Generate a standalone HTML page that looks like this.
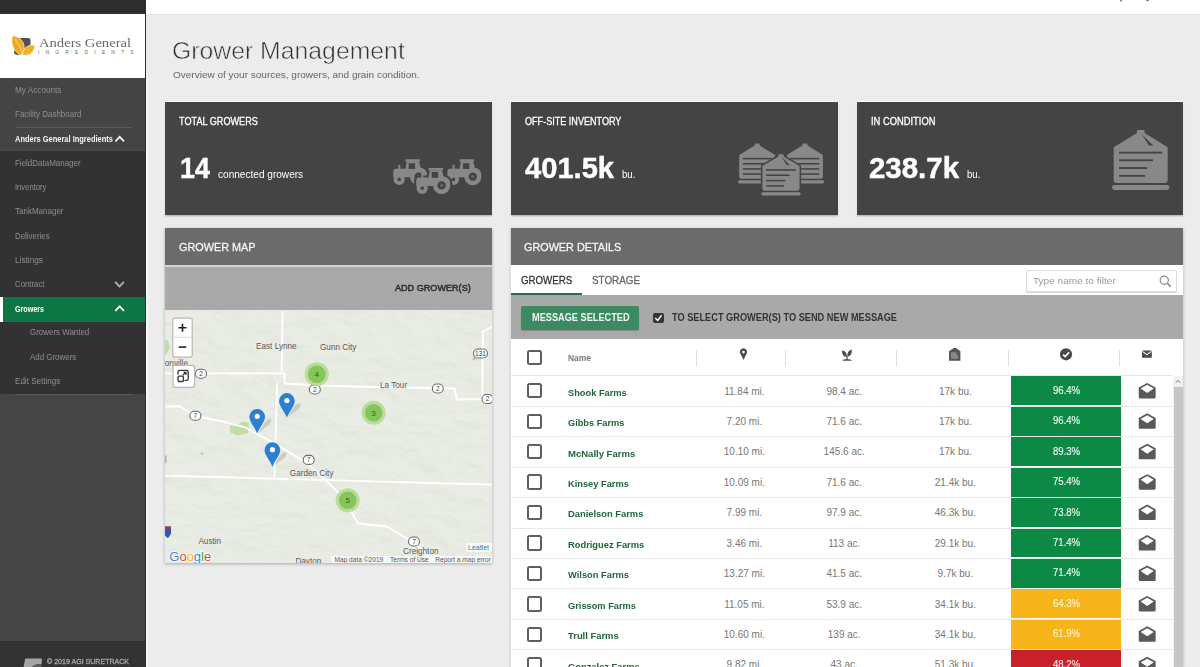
<!DOCTYPE html>
<html><head><meta charset="utf-8"><title>Grower Management</title>
<style>
html,body{margin:0;padding:0;width:1200px;height:667px;overflow:hidden;background:#ececec;font-family:'Liberation Sans', sans-serif;}
.t{position:absolute;white-space:nowrap;line-height:1;transform-origin:0 0;}
.r{position:absolute;}
svg{position:absolute;overflow:visible;}
</style></head><body>
<div class="r" style="left:146px;top:0px;width:1054.00px;height:14.00px;background:#ffffff;"></div>
<div class="r" style="left:146px;top:14px;width:1054.00px;height:1.00px;background:#e4e4e4;"></div>
<svg width="1200" height="20" style="left:0;top:0"><ellipse cx="1121" cy="0" rx="1.2" ry="1.5" fill="#888"/><ellipse cx="1147.5" cy="0" rx="1.5" ry="1.2" fill="#777"/></svg>
<div class="r" style="left:0px;top:0px;width:146.00px;height:14.00px;background:#2e2e2e;"></div>
<div class="r" style="left:0px;top:14px;width:146.00px;height:64.00px;background:#ffffff;"></div>
<div class="r" style="left:0px;top:78px;width:146.00px;height:73.00px;background:#444444;"></div>
<div class="r" style="left:15px;top:126.5px;width:117.00px;height:1.00px;background:#5c5c5c;"></div>
<div class="r" style="left:0px;top:151px;width:146.00px;height:243.00px;background:#323232;"></div>
<div class="r" style="left:0px;top:150.2px;width:146.00px;height:1.00px;background:#4a4a4a;"></div>
<div class="r" style="left:0px;top:296.6px;width:146.00px;height:25.20px;background:#0c7744;"></div>
<div class="r" style="left:0px;top:296.6px;width:3.00px;height:25.20px;background:#ffffff;"></div>
<div class="r" style="left:0px;top:394px;width:146.00px;height:247.00px;background:#454545;"></div>
<div class="r" style="left:14.5px;top:394.2px;width:117.50px;height:1.00px;background:#5a5a5a;"></div>
<div class="r" style="left:0px;top:641px;width:146.00px;height:26.00px;background:#333333;"></div>
<div class="r" style="left:145px;top:14px;width:1.00px;height:653.00px;background:#2c2c2c;"></div>
<div class="r" style="left:146px;top:78px;width:2.00px;height:589.00px;background:#f6f6f6;"></div>
<div class="t" style="left:15.30px;top:85.56px;font-size:8.4px;color:#8e8e8e;transform:scaleX(0.9780);">My Accounts</div>
<div class="t" style="left:15.30px;top:109.76px;font-size:8.4px;color:#8e8e8e;transform:scaleX(0.9570);">Facility Dashboard</div>
<div class="t" style="left:15.30px;top:134.66px;font-size:8.4px;color:#f4f4f4;font-weight:bold;transform:scaleX(0.8913);">Anders General Ingredients</div>
<div class="t" style="left:15.30px;top:158.76px;font-size:8.4px;color:#8e8e8e;transform:scaleX(0.9521);">FieldDataManager</div>
<div class="t" style="left:15.30px;top:183.26px;font-size:8.4px;color:#8e8e8e;transform:scaleX(0.9103);">Inventory</div>
<div class="t" style="left:15.30px;top:207.46px;font-size:8.4px;color:#8e8e8e;transform:scaleX(0.9558);">TankManager</div>
<div class="t" style="left:15.30px;top:231.76px;font-size:8.4px;color:#8e8e8e;transform:scaleX(0.9404);">Deliveries</div>
<div class="t" style="left:15.30px;top:256.06px;font-size:8.4px;color:#8e8e8e;transform:scaleX(0.9820);">Listings</div>
<div class="t" style="left:15.30px;top:280.36px;font-size:8.4px;color:#8e8e8e;transform:scaleX(0.9312);">Contract</div>
<div class="t" style="left:15.30px;top:304.56px;font-size:8.4px;color:#ffffff;font-weight:bold;transform:scaleX(0.8566);">Growers</div>
<div class="t" style="left:29.80px;top:328.36px;font-size:8.4px;color:#8e8e8e;transform:scaleX(0.9481);">Growers Wanted</div>
<div class="t" style="left:29.80px;top:353.16px;font-size:8.4px;color:#8e8e8e;transform:scaleX(0.9469);">Add Growers</div>
<div class="t" style="left:15.30px;top:377.26px;font-size:8.4px;color:#8e8e8e;transform:scaleX(0.9630);">Edit Settings</div>
<svg width="1" height="1" style="left:0;top:0"><path d="M115.40,141.40 L119.70,136.80 L124.00,141.40" fill="none" stroke="#f4f4f4" stroke-width="1.7"/></svg>
<svg width="1" height="1" style="left:0;top:0"><path d="M115.20,281.90 L119.50,286.50 L123.80,281.90" fill="none" stroke="#b8b8b8" stroke-width="1.7"/></svg>
<svg width="1" height="1" style="left:0;top:0"><path d="M115.30,310.90 L119.60,306.30 L123.90,310.90" fill="none" stroke="#ffffff" stroke-width="1.7"/></svg>
<svg width="40" height="30" style="left:10px;top:32px" viewBox="0 0 40 30">
<rect x="4.2" y="6" width="16.3" height="16.8" rx="2.4" fill="#505050"/>
<path d="M2.3,3.8 C11,4.3 17.2,12 12.6,23.2 C4.3,21.5 0.3,13 2.3,3.8 Z" fill="#f0aa1e" stroke="#fff" stroke-width="0.7"/>
<path d="M25.2,13.2 C18.5,12.3 12.3,16 12.6,23.2 C20.2,24.6 24.2,19.5 25.2,13.2 Z" fill="#f2b124" stroke="#fff" stroke-width="0.7"/>
<path d="M4.5,7 C8.5,11 11,15.5 12,21" stroke="#fde6a8" stroke-width="0.7" fill="none"/>
</svg>
<div class="t" style="left:39.30px;top:35.95px;font-size:13.0px;color:#6a6a6a;font-family:'Liberation Serif',serif;transform:scaleX(1.1236);">Anders General</div>
<div class="t" style="left:38.00px;top:50.35px;font-size:5.0px;color:#6a6a6a;letter-spacing:6.15px;">INGREDIENTS</div>
<svg width="1" height="1" style="left:0;top:0"><path d="M25.2,658.5 L42,658.5 L41.6,664 C36,664 33,665.5 32,667.5 L23.5,667.5 Z" fill="#a6a6a6"/><path d="M32,667.5 C33,665.5 36,664 41.6,664 L41.4,667.5 Z" fill="#5e5e5e"/></svg>
<div class="t" style="left:47.30px;top:657.85px;font-size:7.0px;color:#a8a8a8;-webkit-text-stroke:0.28px currentColor;transform:scaleX(1.0082);">&copy; 2019 AGI SURETRACK</div>
<div class="t" style="left:172.18px;top:39.34px;font-size:24.3px;color:#333333;transform:scaleX(1.0199);-webkit-text-stroke:0.55px #ececec;">Grower Management</div>
<div class="t" style="left:173.00px;top:70.42px;font-size:9.5px;color:#666666;transform:scaleX(1.0522);">Overview of your sources, growers, and grain condition.</div>
<div class="r" style="left:164px;top:100.5px;width:329.00px;height:115.00px;background:#ffffff;"></div>
<div class="r" style="left:165px;top:101.5px;width:327.00px;height:113.00px;background:#444444;box-shadow:0 1px 1.5px rgba(0,0,0,.35);"></div>
<div class="t" style="left:178.60px;top:116.84px;font-size:10.3px;color:#ffffff;-webkit-text-stroke:0.28px currentColor;transform:scaleX(0.8853);">TOTAL GROWERS</div>
<div class="r" style="left:510px;top:100.5px;width:328.50px;height:115.00px;background:#ffffff;"></div>
<div class="r" style="left:511px;top:101.5px;width:326.50px;height:113.00px;background:#444444;box-shadow:0 1px 1.5px rgba(0,0,0,.35);"></div>
<div class="t" style="left:524.60px;top:116.84px;font-size:10.3px;color:#ffffff;-webkit-text-stroke:0.28px currentColor;transform:scaleX(0.8805);">OFF-SITE INVENTORY</div>
<div class="r" style="left:856px;top:100.5px;width:328.00px;height:115.00px;background:#ffffff;"></div>
<div class="r" style="left:857px;top:101.5px;width:326.00px;height:113.00px;background:#444444;box-shadow:0 1px 1.5px rgba(0,0,0,.35);"></div>
<div class="t" style="left:870.60px;top:116.84px;font-size:10.3px;color:#ffffff;-webkit-text-stroke:0.28px currentColor;transform:scaleX(0.9079);">IN CONDITION</div>
<div class="t" style="left:179.58px;top:153.58px;font-size:29.2px;color:#ffffff;font-weight:bold;transform:scaleX(0.9183);-webkit-text-stroke:0.45px #fff;">14</div>
<div class="t" style="left:218.40px;top:168.65px;font-size:11px;color:#ffffff;transform:scaleX(0.9161);">connected growers</div>
<div class="t" style="left:524.80px;top:153.58px;font-size:29.2px;color:#ffffff;font-weight:bold;transform:scaleX(0.9973);-webkit-text-stroke:0.45px #fff;">401.5k</div>
<div class="t" style="left:621.70px;top:168.65px;font-size:11px;color:#ffffff;transform:scaleX(0.8730);">bu.</div>
<div class="t" style="left:869.39px;top:153.58px;font-size:29.2px;color:#ffffff;font-weight:bold;transform:scaleX(1.0085);-webkit-text-stroke:0.45px #fff;">238.7k</div>
<div class="t" style="left:967.30px;top:168.65px;font-size:11px;color:#ffffff;transform:scaleX(0.8730);">bu.</div>
<svg width="1" height="1" style="left:0;top:0"><g transform="translate(392.40,159.20) scale(1.0)"><g fill="#888888"><path d="M0.8,13 Q0.8,9.6 3.5,9.6 L13.2,9.6 L14.3,2.4 L26.6,2.4 L28.2,8.6 Q33.8,9.8 34.6,14 L34.6,18 L0.8,18 Z"/><rect x="13" y="0" width="14.6" height="2.6" rx="0.8"/><rect x="6" y="5.6" width="1.9" height="4.4"/><circle cx="26.2" cy="17.4" r="8.6"/><circle cx="6.8" cy="20.2" r="5.6"/></g><rect x="16.3" y="4" width="6.4" height="5.8" fill="#444444"/><circle cx="26.2" cy="17.4" r="4.2" fill="#444444"/><circle cx="26.2" cy="17.4" r="1.6" fill="#666"/><circle cx="6.8" cy="20.2" r="1.8" fill="#444444"/></g><g transform="translate(446.60,159.20) scale(1.0)"><g fill="#888888"><path d="M0.8,13 Q0.8,9.6 3.5,9.6 L13.2,9.6 L14.3,2.4 L26.6,2.4 L28.2,8.6 Q33.8,9.8 34.6,14 L34.6,18 L0.8,18 Z"/><rect x="13" y="0" width="14.6" height="2.6" rx="0.8"/><rect x="6" y="5.6" width="1.9" height="4.4"/><circle cx="26.2" cy="17.4" r="8.6"/><circle cx="6.8" cy="20.2" r="5.6"/></g><rect x="16.3" y="4" width="6.4" height="5.8" fill="#444444"/><circle cx="26.2" cy="17.4" r="4.2" fill="#444444"/><circle cx="26.2" cy="17.4" r="1.6" fill="#666"/><circle cx="6.8" cy="20.2" r="1.8" fill="#444444"/></g><g transform="translate(415.40,168.00) scale(1.0)"><g fill="#444444" stroke="#444444" stroke-width="4.4"><path d="M0.8,13 Q0.8,9.6 3.5,9.6 L13.2,9.6 L14.3,2.4 L26.6,2.4 L28.2,8.6 Q33.8,9.8 34.6,14 L34.6,18 L0.8,18 Z"/><rect x="13" y="0" width="14.6" height="2.6" rx="0.8"/><circle cx="26.2" cy="17.4" r="8.6"/><circle cx="6.8" cy="20.2" r="5.6"/></g><g fill="#888888"><path d="M0.8,13 Q0.8,9.6 3.5,9.6 L13.2,9.6 L14.3,2.4 L26.6,2.4 L28.2,8.6 Q33.8,9.8 34.6,14 L34.6,18 L0.8,18 Z"/><rect x="13" y="0" width="14.6" height="2.6" rx="0.8"/><rect x="6" y="5.6" width="1.9" height="4.4"/><circle cx="26.2" cy="17.4" r="8.6"/><circle cx="6.8" cy="20.2" r="5.6"/></g><rect x="16.3" y="4" width="6.4" height="5.8" fill="#444444"/><circle cx="26.2" cy="17.4" r="4.2" fill="#444444"/><circle cx="26.2" cy="17.4" r="1.6" fill="#666"/><circle cx="6.8" cy="20.2" r="1.8" fill="#444444"/></g><g transform="translate(739.20,143.40) scale(0.6670)"><g fill="#888888"><path d="M23.3,0.5 Q23.3,0 24,0 L30.1,0 Q30.8,0 30.8,0.5 L30.8,3.2 L54,17.3 L54,50 Q54,53 51,53 L3,53 Q0,53 0,50 L0,17.3 L23.3,3.2 Z"/><rect x="-1.7" y="55.2" width="57.4" height="4.8" rx="2.4"/></g><g fill="#444444"><rect x="5.4" y="21.7" width="43.2" height="2.3"/><rect x="5.4" y="29.400000000000002" width="43.2" height="2.3"/><rect x="5.4" y="37.099999999999994" width="43.2" height="2.3"/><rect x="5.4" y="44.8" width="43.2" height="2.3"/></g></g><g transform="translate(786.90,143.40) scale(0.6670)"><g fill="#888888"><path d="M23.3,0.5 Q23.3,0 24,0 L30.1,0 Q30.8,0 30.8,0.5 L30.8,3.2 L54,17.3 L54,50 Q54,53 51,53 L3,53 Q0,53 0,50 L0,17.3 L23.3,3.2 Z"/><rect x="-1.7" y="55.2" width="57.4" height="4.8" rx="2.4"/></g><g fill="#444444"><rect x="5.4" y="21.7" width="43.2" height="2.3"/><rect x="5.4" y="29.400000000000002" width="43.2" height="2.3"/><rect x="5.4" y="37.099999999999994" width="43.2" height="2.3"/><rect x="5.4" y="44.8" width="43.2" height="2.3"/></g></g><g transform="translate(762.40,154.20) scale(0.6880)"><g fill="#444444" stroke="#444444" stroke-width="4.5" stroke-linejoin="round"><path d="M23.3,0.5 Q23.3,0 24,0 L30.1,0 Q30.8,0 30.8,0.5 L30.8,3.2 L54,17.3 L54,50 Q54,53 51,53 L3,53 Q0,53 0,50 L0,17.3 L23.3,3.2 Z"/><rect x="-1.7" y="55.2" width="57.4" height="4.8" rx="2.4"/></g><g fill="#888888"><path d="M23.3,0.5 Q23.3,0 24,0 L30.1,0 Q30.8,0 30.8,0.5 L30.8,3.2 L54,17.3 L54,50 Q54,53 51,53 L3,53 Q0,53 0,50 L0,17.3 L23.3,3.2 Z"/><rect x="-1.7" y="55.2" width="57.4" height="4.8" rx="2.4"/></g><g fill="#444444"><rect x="5.4" y="21.8" width="43.2" height="2.3"/><rect x="5.4" y="29.4" width="34" height="2.3"/><rect x="5.4" y="37.2" width="28.1" height="2.3"/><rect x="5.4" y="45" width="25.9" height="2.3"/><path d="M28.2,4.6 L39.8,15.9 L35.2,15.6 Z"/></g></g><g transform="translate(1113.70,129.90) scale(1.0000)"><g fill="#888888"><path d="M23.3,0.5 Q23.3,0 24,0 L30.1,0 Q30.8,0 30.8,0.5 L30.8,3.2 L54,17.3 L54,50 Q54,53 51,53 L3,53 Q0,53 0,50 L0,17.3 L23.3,3.2 Z"/><rect x="-1.7" y="55.2" width="57.4" height="4.8" rx="2.4"/></g><g fill="#444444"><rect x="5.4" y="21.8" width="43.2" height="1.9"/><rect x="5.4" y="29.4" width="34" height="1.9"/><rect x="5.4" y="37.2" width="28.1" height="1.9"/><rect x="5.4" y="45" width="25.9" height="1.9"/><path d="M28.2,4.6 L39.8,15.9 L35.2,15.6 Z"/></g></g></svg>
<div class="r" style="left:165px;top:227.5px;width:327.00px;height:335.10px;background:#e8ebe2;box-shadow:0 1px 3px rgba(0,0,0,.28);"></div>
<div class="r" style="left:165px;top:227.5px;width:327.00px;height:37.30px;background:#6b6b6b;"></div>
<div class="r" style="left:165px;top:264.8px;width:327.00px;height:1.80px;background:#d2d2d2;"></div>
<div class="r" style="left:165px;top:266.6px;width:327.00px;height:43.90px;background:#a9a9a9;"></div>
<div class="t" style="left:178.70px;top:240.66px;font-size:11.7px;color:#f6f6f6;-webkit-text-stroke:0.28px currentColor;transform:scaleX(0.9290);">GROWER MAP</div>
<div class="t" style="left:395.00px;top:283.01px;font-size:9.4px;color:#2e2e2e;-webkit-text-stroke:0.5px currentColor;transform:scaleX(0.9692);">ADD GROWER(S)</div>
<svg width="327" height="252.1" viewBox="165 310.5 327 252.1" style="left:165px;top:310.5px;overflow:hidden;font-family:'Liberation Sans',sans-serif"><rect x="165" y="310.5" width="327" height="252.10000000000002" fill="#eaede5"/><defs><filter id="terr" x="0" y="0" width="100%" height="100%" color-interpolation-filters="sRGB"><feTurbulence type="fractalNoise" baseFrequency="0.04 0.06" numOctaves="4" seed="11" result="n"/><feDiffuseLighting in="n" lighting-color="#ffffff" surfaceScale="3" diffuseConstant="1.05" result="l"><feDistantLight azimuth="300" elevation="55"/></feDiffuseLighting><feColorMatrix in="l" type="matrix" values="0 0 0 0 0.55  0 0 0 0 0.6  0 0 0 0 0.5  -1 0 0 0 0.95"/></filter></defs><rect x="165" y="310.5" width="327" height="252.10000000000002" filter="url(#terr)" opacity=".2"/><path d="M230,425 L240,424 L241,421 L249,422 L248,433 L237,435 L230,432 Z" fill="#c2dea6"/><path d="M164,341 L168,339 L169.5,348 L166,354 L164,352 Z" fill="#c2dea6"/><path d="M474,355 L477,360 L472,359 Z" fill="#a9cde3"/><ellipse cx="202" cy="453" rx="1.5" ry="1.2" fill="#a9cde3"/><path d="M282.6,310 L281.6,373 M277.2,383 L275.6,440 L274.4,476" fill="none" stroke="#ffffff" stroke-width="1.8" stroke-linejoin="round" stroke-linecap="round"/><path d="M164,372.8 L284.4,372.8 L284.6,383 L330,385.5 L454.6,388 L456.6,399 L493,398.5" fill="none" stroke="#ffffff" stroke-width="1.8" stroke-linejoin="round" stroke-linecap="round"/><path d="M493,326 L483,331 L482.2,399" fill="none" stroke="#ffffff" stroke-width="1.8" stroke-linejoin="round" stroke-linecap="round"/><path d="M164,406 L180,406 L195.3,415.5 L220,420.5 L245,426.8 L279,445.2 L310,465 L341.3,494.8 L358.3,523 L386.6,526 L415,543 L434.8,562 L440,570" fill="none" stroke="#ffffff" stroke-width="1.8" stroke-linejoin="round" stroke-linecap="round"/><path d="M164,475.2 L493,484.2" fill="none" stroke="#ffffff" stroke-width="1.8" stroke-linejoin="round" stroke-linecap="round" stroke-width="1.3"/><text x="256" y="348.5" font-size="8.2" fill="#5a5a5a">East Lynne</text><text x="320" y="349.5" font-size="8.2" fill="#5a5a5a">Gunn City</text><text x="188" y="365.5" font-size="8.2" fill="#5a5a5a" text-anchor="end">onville</text><text x="380" y="388" font-size="8.2" fill="#5a5a5a">La Tour</text><text x="289.8" y="475.5" font-size="8.2" fill="#5a5a5a">Garden City</text><text x="198.4" y="543.4" font-size="8.2" fill="#5a5a5a">Austin</text><text x="403" y="553.5" font-size="8.2" fill="#5a5a5a">Creighton</text><text x="295.4" y="563.5" font-size="8.2" fill="#5a5a5a">Dayton</text><rect x="195.50" y="368.70" width="11" height="9" rx="4.5" fill="#fff" stroke="#6a6a6a" stroke-width="1.1"/><text x="201.00" y="375.50" font-size="6.6" text-anchor="middle" fill="#444">2</text><rect x="309.30" y="384.50" width="11" height="9" rx="4.5" fill="#fff" stroke="#6a6a6a" stroke-width="1.1"/><text x="314.80" y="391.30" font-size="6.6" text-anchor="middle" fill="#444">2</text><rect x="189.90" y="410.80" width="11" height="9" rx="4.5" fill="#fff" stroke="#6a6a6a" stroke-width="1.1"/><text x="195.40" y="417.60" font-size="6.6" text-anchor="middle" fill="#444">7</text><rect x="473.50" y="348.50" width="14" height="9" rx="4.5" fill="#fff" stroke="#6a6a6a" stroke-width="1.1"/><text x="480.50" y="355.30" font-size="6.6" text-anchor="middle" fill="#444">131</text><rect x="432.30" y="383.50" width="11" height="9" rx="4.5" fill="#fff" stroke="#6a6a6a" stroke-width="1.1"/><text x="437.80" y="390.30" font-size="6.6" text-anchor="middle" fill="#444">2</text><rect x="482.00" y="394.00" width="11" height="9" rx="4.5" fill="#fff" stroke="#6a6a6a" stroke-width="1.1"/><text x="487.50" y="400.80" font-size="6.6" text-anchor="middle" fill="#444">2</text><rect x="303.20" y="454.90" width="11" height="9" rx="4.5" fill="#fff" stroke="#6a6a6a" stroke-width="1.1"/><text x="308.70" y="461.70" font-size="6.6" text-anchor="middle" fill="#444">7</text><rect x="408.50" y="536.50" width="11" height="9" rx="4.5" fill="#fff" stroke="#6a6a6a" stroke-width="1.1"/><text x="414.00" y="543.30" font-size="6.6" text-anchor="middle" fill="#444">7</text><path d="M164,526 L171,526 L171,533 Q169,537 167.5,537.5 Q166,537 164,533 Z" fill="#2f5aa8"/><rect x="164" y="526" width="7" height="2" fill="#c8312f"/><path d="M164,455 L166.5,455 L166.5,462 L164,463 Z" fill="#7a86b8" opacity=".6"/><circle cx="316.8" cy="373.8" r="12" fill="#b4d98c" opacity=".85"/><circle cx="316.8" cy="373.8" r="8.8" fill="#86c55a"/><text x="316.8" y="376.6" font-size="8" text-anchor="middle" fill="#3d5a30">4</text><circle cx="373.6" cy="412.3" r="12" fill="#b4d98c" opacity=".85"/><circle cx="373.6" cy="412.3" r="8.8" fill="#86c55a"/><text x="373.6" y="415.1" font-size="8" text-anchor="middle" fill="#3d5a30">3</text><circle cx="347.7" cy="499.8" r="12" fill="#b4d98c" opacity=".85"/><circle cx="347.7" cy="499.8" r="8.8" fill="#86c55a"/><text x="347.7" y="502.6" font-size="8" text-anchor="middle" fill="#3d5a30">5</text><path d="M287.4,416.6 L294.9,405.6 Q298.9,400.6 300.9,403.6 Q300.9,407.6 295.9,410.6 Z" fill="rgba(0,0,0,.13)"/><path d="M286.9,417.1 C284.4,410.6 279.09999999999997,405.6 279.09999999999997,400.40000000000003 A7.8,7.8 0 0 1 294.7,400.40000000000003 C294.7,405.6 289.4,410.6 286.9,417.1 Z" fill="#2b80cf"/><circle cx="286.9" cy="400.0" r="2.6" fill="#fff"/><path d="M257.7,432.4 L265.2,421.4 Q269.2,416.4 271.2,419.4 Q271.2,423.4 266.2,426.4 Z" fill="rgba(0,0,0,.13)"/><path d="M257.2,432.9 C254.7,426.4 249.39999999999998,421.4 249.39999999999998,416.2 A7.8,7.8 0 0 1 265.0,416.2 C265.0,421.4 259.7,426.4 257.2,432.9 Z" fill="#2b80cf"/><circle cx="257.2" cy="415.79999999999995" r="2.6" fill="#fff"/><path d="M272.9,465.8 L280.4,454.8 Q284.4,449.8 286.4,452.8 Q286.4,456.8 281.4,459.8 Z" fill="rgba(0,0,0,.13)"/><path d="M272.4,466.3 C269.9,459.8 264.59999999999997,454.8 264.59999999999997,449.6 A7.8,7.8 0 0 1 280.2,449.6 C280.2,454.8 274.9,459.8 272.4,466.3 Z" fill="#2b80cf"/><circle cx="272.4" cy="449.2" r="2.6" fill="#fff"/><text x="169.3" y="560.2" font-size="13" stroke="#fff" stroke-width="1.4" paint-order="stroke" fill="#4285f4"><tspan fill="#4a7de0">G</tspan><tspan fill="#db4437">o</tspan><tspan fill="#f4b400">o</tspan><tspan fill="#4a7de0">g</tspan><tspan fill="#2f9e44">l</tspan><tspan fill="#db4437">e</tspan></text><rect x="466" y="542.5" width="26" height="9" fill="#ffffff" opacity=".75"/><text x="468" y="549.5" font-size="7" fill="#2a7fb0">Leaflet</text><rect x="331" y="555.5" width="162" height="8" fill="#ffffff" opacity=".7"/><text x="334.5" y="561.8" font-size="6.6" fill="#555">Map data ©2019</text><text x="390" y="561.8" font-size="6.6" fill="#555">Terms of Use</text><text x="435.3" y="561.8" font-size="6.6" fill="#555">Report a map error</text><rect x="172.8" y="317.6" width="19.4" height="39" rx="2" fill="#fff" stroke="#b8b8b8" stroke-width="1.2"/><line x1="173.4" y1="336.8" x2="191.6" y2="336.8" stroke="#d0d0d0" stroke-width="0.8"/><path d="M178.5,327.2 L186.5,327.2 M182.5,323.2 L182.5,331.2" stroke="#222" stroke-width="1.6"/><path d="M178.8,346.6 L186.2,346.6" stroke="#222" stroke-width="1.6"/><rect x="173" y="364.8" width="21.6" height="22" rx="2" fill="#fff" stroke="#b8b8b8" stroke-width="1.2"/><rect x="178" y="375.6" width="5.4" height="5.4" rx="1" fill="none" stroke="#333" stroke-width="1.3"/><path d="M178,374 L178,371.4 Q178,369.8 179.6,369.8 L186.6,369.8 Q188.2,369.8 188.2,371.4 L188.2,378.2 Q188.2,379.8 186.6,379.8 L184.6,379.8 M182.8,374.8 L186,371.8 M183.6,371.8 L186,371.8 L186,374.2" fill="none" stroke="#333" stroke-width="1.3"/></svg>
<div class="r" style="left:511px;top:227.5px;width:672.00px;height:439.50px;background:#ffffff;box-shadow:0 1px 3px rgba(0,0,0,.25);"></div>
<div class="r" style="left:511px;top:227.5px;width:672.00px;height:37.30px;background:#6b6b6b;"></div>
<div class="r" style="left:511px;top:264.8px;width:672.00px;height:402.20px;background:#ffffff;"></div>
<div class="r" style="left:510px;top:264.8px;width:1.00px;height:402.20px;background:#e0e0e0;"></div>
<div class="t" style="left:524.40px;top:240.66px;font-size:11.7px;color:#f6f6f6;-webkit-text-stroke:0.28px currentColor;transform:scaleX(0.9260);">GROWER DETAILS</div>
<div class="t" style="left:521.10px;top:275.19px;font-size:10.6px;color:#333333;-webkit-text-stroke:0.28px currentColor;transform:scaleX(0.9168);">GROWERS</div>
<div class="t" style="left:592.10px;top:275.19px;font-size:10.6px;color:#666666;-webkit-text-stroke:0.28px currentColor;transform:scaleX(0.9313);">STORAGE</div>
<div class="r" style="left:511px;top:293.2px;width:71.00px;height:2.20px;background:#2e6b4b;"></div>
<div class="r" style="left:1026px;top:270.2px;width:150.50px;height:21.50px;background:#ffffff;box-sizing:border-box;border:1px solid #dcdcdc;border-radius:2px;box-shadow:0 1px 1px rgba(0,0,0,.18);"></div>
<div class="t" style="left:1032.80px;top:276.34px;font-size:9.6px;color:#9a9a9a;transform:scaleX(1.0486);">Type name to filter</div>
<svg width="1" height="1" style="left:0;top:0"><circle cx="1164.3" cy="280.3" r="4.1" fill="none" stroke="#888" stroke-width="1.2"/><path d="M1167.3,283.3 L1170.6,286.6" stroke="#888" stroke-width="1.5"/></svg>
<div class="r" style="left:511px;top:295.4px;width:672.00px;height:44.00px;background:#a9a9a9;"></div>
<div class="r" style="left:521.3px;top:305.8px;width:118.20px;height:24.20px;background:#3b8a62;border-radius:2px;box-shadow:0 1px 1px rgba(0,0,0,.2);"></div>
<div class="t" style="left:531.70px;top:313.03px;font-size:10.2px;color:#eef7f1;font-weight:bold;transform:scaleX(0.9020);">MESSAGE SELECTED</div>
<div class="r" style="left:652.5px;top:312.5px;width:11.70px;height:10.80px;background:#353535;border-radius:2px;"></div>
<svg width="1" height="1" style="left:0;top:0"><path d="M655.2,317.9 L657.7,320.4 L661.6,315.3" fill="none" stroke="#fff" stroke-width="1.4"/></svg>
<div class="t" style="left:672.10px;top:312.90px;font-size:10.0px;color:#333333;font-weight:bold;transform:scaleX(0.9218);">TO SELECT GROWER(S) TO SEND NEW MESSAGE</div>
<div class="r" style="left:511px;top:375.4px;width:661.50px;height:1.00px;background:#e6e6e6;"></div>
<div class="r" style="left:526.6px;top:349.5px;width:15.40px;height:15.40px;background:transparent;box-sizing:border-box;border:2px solid #5f5f5f;border-radius:2.5px;"></div>
<div class="t" style="left:568.10px;top:353.66px;font-size:8.4px;color:#777777;font-weight:bold;transform:scaleX(1.0107);">Name</div>
<div class="r" style="left:696.2px;top:350px;width:1.00px;height:16.00px;background:#dedede;"></div>
<div class="r" style="left:784.8px;top:350px;width:1.00px;height:16.00px;background:#dedede;"></div>
<div class="r" style="left:896.2px;top:350px;width:1.00px;height:16.00px;background:#dedede;"></div>
<div class="r" style="left:1007.8px;top:350px;width:1.00px;height:16.00px;background:#dedede;"></div>
<div class="r" style="left:1119.2px;top:350px;width:1.00px;height:16.00px;background:#dedede;"></div>
<svg width="1" height="1" style="left:0;top:0"><path d="M743.5,359.9 L740.3,353.6 A3.6,3.6 0 1 1 746.7,353.6 Z" fill="#4a4a4a"/><circle cx="743.5" cy="352.1" r="1.3" fill="#fff"/><g fill="#4a4a4a"><path d="M846.6,356.8 C843.5,357.2 841.8,354 842,350.6 C845,350.8 847,352.8 846.6,356.8 Z"/><path d="M847.4,356.6 C847,352.6 849,350 851.8,349.8 C852.2,353.6 850.5,356.4 847.4,356.6 Z"/><rect x="846.4" y="355.5" width="1.2" height="4"/><path d="M842.3,360.8 Q842.8,359 847,359 Q851.3,359 851.8,360.8 Z"/></g><path d="M953.8,348 L956.2,348 L960.4,351.2 L960.4,360.8 L949,360.8 L949,351.2 Z" fill="#555"/><path d="M951,352.3 L958,352.3 L958,358.8 L951,358.8 Z" fill="#8a8a8a"/><path d="M955.5,352.3 L958,352.3 L958,356 Z" fill="#555"/><circle cx="1066" cy="354.3" r="6.1" fill="#4a4a4a"/><path d="M1063.1,354.6 L1065.2,356.6 L1069.1,352.3" fill="none" stroke="#fff" stroke-width="1.6"/><rect x="1142" y="350.6" width="9.8" height="7.2" rx="0.6" fill="#4a4a4a"/><path d="M1142.4,351.4 L1146.9,354.6 L1151.4,351.4" fill="none" stroke="#fff" stroke-width="1.1"/></svg>
<div class="r" style="left:1010.5px;top:376.4px;width:110.80px;height:28.93px;background:#0c8a45;"></div>
<div class="r" style="left:511px;top:405.83px;width:661.50px;height:1.00px;background:#e8e8e8;"></div>
<div class="r" style="left:526.6px;top:383.09999999999997px;width:15.40px;height:15.40px;background:transparent;box-sizing:border-box;border:2px solid #5f5f5f;border-radius:2.5px;"></div>
<div class="t" style="left:568.30px;top:387.65px;font-size:9.7px;color:#1f663c;font-weight:bold;transform:scaleX(0.9577);">Shook Farms</div>
<div class="t" style="left:724.19px;top:386.50px;font-size:10.0px;color:#777777;">11.84 mi.</div>
<div class="t" style="left:826.40px;top:386.50px;font-size:10.0px;color:#777777;">98.4 ac.</div>
<div class="t" style="left:938.99px;top:386.50px;font-size:10.0px;color:#777777;">17k bu.</div>
<div class="t" style="left:1052.80px;top:385.80px;font-size:10.0px;color:#eaf7ef;-webkit-text-stroke:0.15px currentColor;transform:scaleX(0.9556);">96.4%</div>
<svg width="1" height="1" style="left:0;top:0"><g transform="translate(1138.75,382.90)"><path d="M0,4.6 L8.45,0 L16.9,4.6 L16.9,14.4 Q16.9,15.5 15.8,15.5 L1.1,15.5 Q0,15.5 0,14.4 Z" fill="#595959"/><path d="M1.9,5.6 L8.45,1.9 L15.0,5.6 L8.45,10.0 Z" fill="#ffffff"/></g></svg>
<div class="r" style="left:1010.5px;top:406.83px;width:110.80px;height:28.93px;background:#0c8a45;"></div>
<div class="r" style="left:511px;top:436.26px;width:661.50px;height:1.00px;background:#e8e8e8;"></div>
<div class="r" style="left:526.6px;top:413.53px;width:15.40px;height:15.40px;background:transparent;box-sizing:border-box;border:2px solid #5f5f5f;border-radius:2.5px;"></div>
<div class="t" style="left:568.30px;top:418.08px;font-size:9.7px;color:#1f663c;font-weight:bold;transform:scaleX(0.9502);">Gibbs Farms</div>
<div class="t" style="left:726.60px;top:416.93px;font-size:10.0px;color:#777777;">7.20 mi.</div>
<div class="t" style="left:826.40px;top:416.93px;font-size:10.0px;color:#777777;">71.6 ac.</div>
<div class="t" style="left:938.99px;top:416.93px;font-size:10.0px;color:#777777;">17k bu.</div>
<div class="t" style="left:1052.80px;top:416.23px;font-size:10.0px;color:#eaf7ef;-webkit-text-stroke:0.15px currentColor;transform:scaleX(0.9556);">96.4%</div>
<svg width="1" height="1" style="left:0;top:0"><g transform="translate(1138.75,413.33)"><path d="M0,4.6 L8.45,0 L16.9,4.6 L16.9,14.4 Q16.9,15.5 15.8,15.5 L1.1,15.5 Q0,15.5 0,14.4 Z" fill="#595959"/><path d="M1.9,5.6 L8.45,1.9 L15.0,5.6 L8.45,10.0 Z" fill="#ffffff"/></g></svg>
<div class="r" style="left:1010.5px;top:437.26px;width:110.80px;height:28.93px;background:#0c8a45;"></div>
<div class="r" style="left:511px;top:466.69px;width:661.50px;height:1.00px;background:#e8e8e8;"></div>
<div class="r" style="left:526.6px;top:443.96px;width:15.40px;height:15.40px;background:transparent;box-sizing:border-box;border:2px solid #5f5f5f;border-radius:2.5px;"></div>
<div class="t" style="left:568.30px;top:448.51px;font-size:9.7px;color:#1f663c;font-weight:bold;transform:scaleX(0.9825);">McNally Farms</div>
<div class="t" style="left:723.82px;top:447.36px;font-size:10.0px;color:#777777;">10.10 mi.</div>
<div class="t" style="left:823.62px;top:447.36px;font-size:10.0px;color:#777777;">145.6 ac.</div>
<div class="t" style="left:938.99px;top:447.36px;font-size:10.0px;color:#777777;">17k bu.</div>
<div class="t" style="left:1052.80px;top:446.66px;font-size:10.0px;color:#eaf7ef;-webkit-text-stroke:0.15px currentColor;transform:scaleX(0.9556);">89.3%</div>
<svg width="1" height="1" style="left:0;top:0"><g transform="translate(1138.75,443.76)"><path d="M0,4.6 L8.45,0 L16.9,4.6 L16.9,14.4 Q16.9,15.5 15.8,15.5 L1.1,15.5 Q0,15.5 0,14.4 Z" fill="#595959"/><path d="M1.9,5.6 L8.45,1.9 L15.0,5.6 L8.45,10.0 Z" fill="#ffffff"/></g></svg>
<div class="r" style="left:1010.5px;top:467.68999999999994px;width:110.80px;height:28.93px;background:#0c8a45;"></div>
<div class="r" style="left:511px;top:497.11999999999995px;width:661.50px;height:1.00px;background:#e8e8e8;"></div>
<div class="r" style="left:526.6px;top:474.38999999999993px;width:15.40px;height:15.40px;background:transparent;box-sizing:border-box;border:2px solid #5f5f5f;border-radius:2.5px;"></div>
<div class="t" style="left:568.30px;top:478.94px;font-size:9.7px;color:#1f663c;font-weight:bold;transform:scaleX(0.9581);">Kinsey Farms</div>
<div class="t" style="left:723.82px;top:477.79px;font-size:10.0px;color:#777777;">10.09 mi.</div>
<div class="t" style="left:826.40px;top:477.79px;font-size:10.0px;color:#777777;">71.6 ac.</div>
<div class="t" style="left:934.82px;top:477.79px;font-size:10.0px;color:#777777;">21.4k bu.</div>
<div class="t" style="left:1052.80px;top:477.09px;font-size:10.0px;color:#eaf7ef;-webkit-text-stroke:0.15px currentColor;transform:scaleX(0.9556);">75.4%</div>
<svg width="1" height="1" style="left:0;top:0"><g transform="translate(1138.75,474.19)"><path d="M0,4.6 L8.45,0 L16.9,4.6 L16.9,14.4 Q16.9,15.5 15.8,15.5 L1.1,15.5 Q0,15.5 0,14.4 Z" fill="#595959"/><path d="M1.9,5.6 L8.45,1.9 L15.0,5.6 L8.45,10.0 Z" fill="#ffffff"/></g></svg>
<div class="r" style="left:1010.5px;top:498.12px;width:110.80px;height:28.93px;background:#0c8a45;"></div>
<div class="r" style="left:511px;top:527.55px;width:661.50px;height:1.00px;background:#e8e8e8;"></div>
<div class="r" style="left:526.6px;top:504.82px;width:15.40px;height:15.40px;background:transparent;box-sizing:border-box;border:2px solid #5f5f5f;border-radius:2.5px;"></div>
<div class="t" style="left:568.30px;top:509.38px;font-size:9.7px;color:#1f663c;font-weight:bold;transform:scaleX(0.9656);">Danielson Farms</div>
<div class="t" style="left:726.60px;top:508.22px;font-size:10.0px;color:#777777;">7.99 mi.</div>
<div class="t" style="left:826.40px;top:508.22px;font-size:10.0px;color:#777777;">97.9 ac.</div>
<div class="t" style="left:934.82px;top:508.22px;font-size:10.0px;color:#777777;">46.3k bu.</div>
<div class="t" style="left:1052.80px;top:507.52px;font-size:10.0px;color:#eaf7ef;-webkit-text-stroke:0.15px currentColor;transform:scaleX(0.9556);">73.8%</div>
<svg width="1" height="1" style="left:0;top:0"><g transform="translate(1138.75,504.62)"><path d="M0,4.6 L8.45,0 L16.9,4.6 L16.9,14.4 Q16.9,15.5 15.8,15.5 L1.1,15.5 Q0,15.5 0,14.4 Z" fill="#595959"/><path d="M1.9,5.6 L8.45,1.9 L15.0,5.6 L8.45,10.0 Z" fill="#ffffff"/></g></svg>
<div class="r" style="left:1010.5px;top:528.55px;width:110.80px;height:28.93px;background:#0c8a45;"></div>
<div class="r" style="left:511px;top:557.9799999999999px;width:661.50px;height:1.00px;background:#e8e8e8;"></div>
<div class="r" style="left:526.6px;top:535.25px;width:15.40px;height:15.40px;background:transparent;box-sizing:border-box;border:2px solid #5f5f5f;border-radius:2.5px;"></div>
<div class="t" style="left:568.30px;top:539.80px;font-size:9.7px;color:#1f663c;font-weight:bold;transform:scaleX(0.9627);">Rodriguez Farms</div>
<div class="t" style="left:726.60px;top:538.65px;font-size:10.0px;color:#777777;">3.46 mi.</div>
<div class="t" style="left:828.16px;top:538.65px;font-size:10.0px;color:#777777;">113 ac.</div>
<div class="t" style="left:934.82px;top:538.65px;font-size:10.0px;color:#777777;">29.1k bu.</div>
<div class="t" style="left:1052.80px;top:537.95px;font-size:10.0px;color:#eaf7ef;-webkit-text-stroke:0.15px currentColor;transform:scaleX(0.9556);">71.4%</div>
<svg width="1" height="1" style="left:0;top:0"><g transform="translate(1138.75,535.05)"><path d="M0,4.6 L8.45,0 L16.9,4.6 L16.9,14.4 Q16.9,15.5 15.8,15.5 L1.1,15.5 Q0,15.5 0,14.4 Z" fill="#595959"/><path d="M1.9,5.6 L8.45,1.9 L15.0,5.6 L8.45,10.0 Z" fill="#ffffff"/></g></svg>
<div class="r" style="left:1010.5px;top:558.98px;width:110.80px;height:28.93px;background:#0c8a45;"></div>
<div class="r" style="left:511px;top:588.41px;width:661.50px;height:1.00px;background:#e8e8e8;"></div>
<div class="r" style="left:526.6px;top:565.6800000000001px;width:15.40px;height:15.40px;background:transparent;box-sizing:border-box;border:2px solid #5f5f5f;border-radius:2.5px;"></div>
<div class="t" style="left:568.30px;top:570.24px;font-size:9.7px;color:#1f663c;font-weight:bold;transform:scaleX(0.9612);">Wilson Farms</div>
<div class="t" style="left:723.82px;top:569.08px;font-size:10.0px;color:#777777;">13.27 mi.</div>
<div class="t" style="left:826.40px;top:569.08px;font-size:10.0px;color:#777777;">41.5 ac.</div>
<div class="t" style="left:937.60px;top:569.08px;font-size:10.0px;color:#777777;">9.7k bu.</div>
<div class="t" style="left:1052.80px;top:568.38px;font-size:10.0px;color:#eaf7ef;-webkit-text-stroke:0.15px currentColor;transform:scaleX(0.9556);">71.4%</div>
<svg width="1" height="1" style="left:0;top:0"><g transform="translate(1138.75,565.48)"><path d="M0,4.6 L8.45,0 L16.9,4.6 L16.9,14.4 Q16.9,15.5 15.8,15.5 L1.1,15.5 Q0,15.5 0,14.4 Z" fill="#595959"/><path d="M1.9,5.6 L8.45,1.9 L15.0,5.6 L8.45,10.0 Z" fill="#ffffff"/></g></svg>
<div class="r" style="left:1010.5px;top:589.41px;width:110.80px;height:28.93px;background:#f8b51b;"></div>
<div class="r" style="left:511px;top:618.8399999999999px;width:661.50px;height:1.00px;background:#e8e8e8;"></div>
<div class="r" style="left:526.6px;top:596.11px;width:15.40px;height:15.40px;background:transparent;box-sizing:border-box;border:2px solid #5f5f5f;border-radius:2.5px;"></div>
<div class="t" style="left:568.30px;top:600.66px;font-size:9.7px;color:#1f663c;font-weight:bold;transform:scaleX(0.9564);">Grissom Farms</div>
<div class="t" style="left:724.19px;top:599.51px;font-size:10.0px;color:#777777;">11.05 mi.</div>
<div class="t" style="left:826.40px;top:599.51px;font-size:10.0px;color:#777777;">53.9 ac.</div>
<div class="t" style="left:934.82px;top:599.51px;font-size:10.0px;color:#777777;">34.1k bu.</div>
<div class="t" style="left:1052.80px;top:598.81px;font-size:10.0px;color:#fdf0cc;-webkit-text-stroke:0.15px currentColor;transform:scaleX(0.9556);">64.3%</div>
<svg width="1" height="1" style="left:0;top:0"><g transform="translate(1138.75,595.91)"><path d="M0,4.6 L8.45,0 L16.9,4.6 L16.9,14.4 Q16.9,15.5 15.8,15.5 L1.1,15.5 Q0,15.5 0,14.4 Z" fill="#595959"/><path d="M1.9,5.6 L8.45,1.9 L15.0,5.6 L8.45,10.0 Z" fill="#ffffff"/></g></svg>
<div class="r" style="left:1010.5px;top:619.8399999999999px;width:110.80px;height:28.93px;background:#f8b51b;"></div>
<div class="r" style="left:511px;top:649.2699999999999px;width:661.50px;height:1.00px;background:#e8e8e8;"></div>
<div class="r" style="left:526.6px;top:626.54px;width:15.40px;height:15.40px;background:transparent;box-sizing:border-box;border:2px solid #5f5f5f;border-radius:2.5px;"></div>
<div class="t" style="left:568.30px;top:631.09px;font-size:9.7px;color:#1f663c;font-weight:bold;transform:scaleX(0.9704);">Trull Farms</div>
<div class="t" style="left:723.82px;top:629.94px;font-size:10.0px;color:#777777;">10.60 mi.</div>
<div class="t" style="left:827.79px;top:629.94px;font-size:10.0px;color:#777777;">139 ac.</div>
<div class="t" style="left:934.82px;top:629.94px;font-size:10.0px;color:#777777;">34.1k bu.</div>
<div class="t" style="left:1052.80px;top:629.24px;font-size:10.0px;color:#fdf0cc;-webkit-text-stroke:0.15px currentColor;transform:scaleX(0.9556);">61.9%</div>
<svg width="1" height="1" style="left:0;top:0"><g transform="translate(1138.75,626.34)"><path d="M0,4.6 L8.45,0 L16.9,4.6 L16.9,14.4 Q16.9,15.5 15.8,15.5 L1.1,15.5 Q0,15.5 0,14.4 Z" fill="#595959"/><path d="M1.9,5.6 L8.45,1.9 L15.0,5.6 L8.45,10.0 Z" fill="#ffffff"/></g></svg>
<div class="r" style="left:1010.5px;top:650.27px;width:110.80px;height:28.93px;background:#c9212b;"></div>
<div class="r" style="left:511px;top:679.6999999999999px;width:661.50px;height:1.00px;background:#e8e8e8;"></div>
<div class="r" style="left:526.6px;top:656.97px;width:15.40px;height:15.40px;background:transparent;box-sizing:border-box;border:2px solid #5f5f5f;border-radius:2.5px;"></div>
<div class="t" style="left:568.30px;top:661.52px;font-size:9.7px;color:#1f663c;font-weight:bold;transform:scaleX(0.9647);">Gonzalez Farms</div>
<div class="t" style="left:726.60px;top:660.37px;font-size:10.0px;color:#777777;">9.82 mi.</div>
<div class="t" style="left:830.57px;top:660.37px;font-size:10.0px;color:#777777;">43 ac.</div>
<div class="t" style="left:934.82px;top:660.37px;font-size:10.0px;color:#777777;">51.3k bu.</div>
<div class="t" style="left:1052.80px;top:659.67px;font-size:10.0px;color:#fbe3e3;-webkit-text-stroke:0.15px currentColor;transform:scaleX(0.9556);">48.2%</div>
<svg width="1" height="1" style="left:0;top:0"><g transform="translate(1138.75,656.77)"><path d="M0,4.6 L8.45,0 L16.9,4.6 L16.9,14.4 Q16.9,15.5 15.8,15.5 L1.1,15.5 Q0,15.5 0,14.4 Z" fill="#595959"/><path d="M1.9,5.6 L8.45,1.9 L15.0,5.6 L8.45,10.0 Z" fill="#ffffff"/></g></svg>
<div class="r" style="left:1172.7px;top:375.9px;width:10.60px;height:291.10px;background:#f1f1f1;"></div>
<div class="r" style="left:1173.5px;top:386.5px;width:9.00px;height:280.50px;background:#c6c6c6;"></div>
<svg width="1" height="1" style="left:0;top:0"><path d="M1175.8,382.6 L1178,380.4 L1180.2,382.6" fill="none" stroke="#777" stroke-width="1"/></svg>
</body></html>
